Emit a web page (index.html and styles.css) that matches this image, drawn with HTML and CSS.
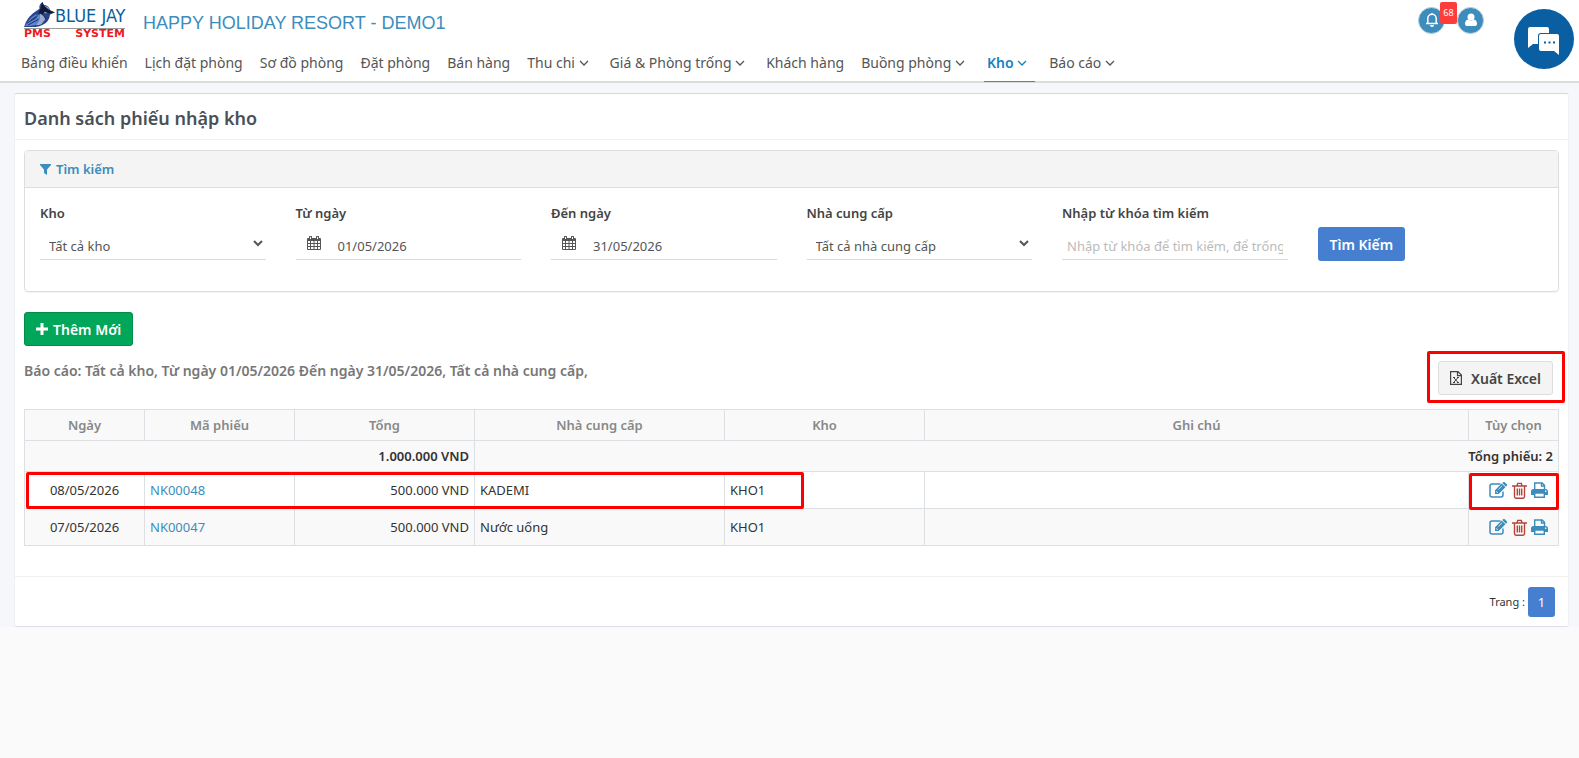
FILE: index.html
```html
<!DOCTYPE html>
<html lang="vi">
<head>
    <meta charset="UTF-8">
    <meta name="viewport" content="width=device-width, initial-scale=1.0">
    <title>Danh sách phiếu nhập kho</title>
    <link rel="stylesheet" href="styles.css">
</head>
<body>
    <svg class="sprite" aria-hidden="true">
        <symbol id="chevron" viewBox="0 0 10 10"><path d="M1 3l4 4 4-4" fill="none" stroke="currentColor" stroke-width="1.3"/></symbol>
        <symbol id="calendar" viewBox="0 0 14 14">
            <path fill="currentColor" fill-rule="evenodd" d="M1 2h1V1a1 1 0 0 1 3 0v1h4V1a1 1 0 0 1 3 0v1h1a1 1 0 0 1 1 1v10a1 1 0 0 1-1 1H1a1 1 0 0 1-1-1V3a1 1 0 0 1 1-1zM1 5v2h2V5zm3 0v2h2.500V5zm3.500 0v2H10V5zM11 5v2h2V5zM1 8v2h2V8zm3 0v2h2.500V8zm3.500 0v2H10V8zM11 8v2h2V8zM1 11v2h2v-2zm3 0v2h2.500v-2zm3.500 0v2H10v-2zM11 11v2h2v-2zM3 1v2h1V1zm7 0v2h1V1z"/>
        </symbol>
        <symbol id="edit" viewBox="0 0 19 16">
            <path d="M14 9.500V13a2 2 0 0 1-2 2H3a2 2 0 0 1-2-2V4a2 2 0 0 1 2-2h8.500" fill="none" stroke="currentColor" stroke-width="1.500"/>
            <path d="M6 12V8.300l6.700-6.700 3.700 3.700L9.700 12zM13.300 1l.8-.7a1.200 1.200 0 0 1 1.700 0L17.700 2.200a1.200 1.200 0 0 1 0 1.700l-.8.800z" fill="currentColor"/>
            <path d="M7 9.200l1.800 1.800M9.300 7.500l3.700-3.700" stroke="#fff" stroke-width=".8"/>
        </symbol>
        <symbol id="trash" viewBox="0 0 15 17">
            <path d="M0 4h15M5 4l.7-2.600h3.600L10 4M2.500 4v10.500q0 1.700 1.500 1.700h7q1.500 0 1.500-1.700V4M5.300 6.500v7M7.500 6.500v7M9.700 6.500v7" fill="none" stroke="currentColor" stroke-width="1.400"/>
        </symbol>
        <symbol id="print" viewBox="0 0 17 16">
            <path d="M3.700 8V1h7.500l2.300 2.300V8M10.500 1v3h3" fill="none" stroke="currentColor" stroke-width="1.400"/>
            <path d="M0 9.500Q0 7 2.500 7h12Q17 7 17 9.500V13h-3v3H3v-3H0zM4.400 11.700v2.900h8.200v-2.900zM14 8.600v1.300h1.300V8.600z" fill="currentColor" fill-rule="evenodd"/>
        </symbol>
    </svg>

    <header class="header">
        <div class="brand-row">
            <a class="logo" href="#" aria-label="Blue Jay PMS System">
                <span class="logo-top">
                    <svg class="bird" viewBox="0 0 32 27" aria-hidden="true">
                        <path d="M0 26q2-8 9-14 4-3 7-5-1-4 3-7l1 3q6 0 7 6l5 2-5 2q-1 8-8 11-5 2.500-9 2z" fill="#29428c"/>
                        <path d="M1 25q4-8 11-12 7 0 7 5-3 6-12 7z" fill="#5c84cc"/>
                        <path d="M18 5l3-1q5 1 5 5l-3 3-5-3z" fill="#b9c6df"/>
                        <path d="M17 7l2-7 2 4 5 4 6 3-6 1-5-2-2 3 4 4-2 1-6-6z" fill="#111b35"/>
                        <path d="M16 12q4 1 6 6l-4 5q-3 1-6 1 6-4 4-12z" fill="#9badcf"/>
                        <path d="M3 22l10-6M4 24l11-6M7 19l7-5" stroke="#1a2c66" stroke-width="1"/>
                    </svg>
                    <span class="logo-name">BLUE JAY</span>
                </span>
                <span class="logo-sub"><span>PMS</span><span>SYSTEM</span></span>
            </a>
            <span class="hotel">HAPPY HOLIDAY RESORT - DEMO1</span>
            <div class="user-tools">
                <button class="round-btn" type="button" aria-label="Thông báo">
                    <svg width="16" height="16" viewBox="0 0 16 16"><path d="M2 11.500h12M3.800 11V6.500a4.200 4.200 0 0 1 8.400 0V11M8 1v1.500" fill="none" stroke="#fff" stroke-width="1.500"/><path d="M6 13h4a2 2 0 0 1-4 0z" fill="#fff"/></svg>
                    <span class="badge">68</span>
                </button>
                <button class="round-btn" type="button" aria-label="Tài khoản">
                    <svg width="14" height="14" viewBox="0 0 14 14"><circle cx="7" cy="4" r="3.500" fill="#fff"/><path d="M1 11q0-4 3-4.500 3 2 6 0 3 .5 3 4.500 0 2-2 2H3q-2 0-2-2z" fill="#fff"/></svg>
                </button>
            </div>
        </div>
        <nav class="menu">
            <a href="#">Bảng điều khiển</a>
            <a href="#">Lịch đặt phòng</a>
            <a href="#">Sơ đồ phòng</a>
            <a href="#">Đặt phòng</a>
            <a href="#">Bán hàng</a>
            <a class="has-sub" href="#">Thu chi <svg><use href="#chevron"/></svg></a>
            <a class="has-sub" href="#">Giá &amp; Phòng trống <svg><use href="#chevron"/></svg></a>
            <a href="#">Khách hàng</a>
            <a class="has-sub" href="#">Buồng phòng <svg><use href="#chevron"/></svg></a>
            <a class="has-sub active" href="#">Kho <svg><use href="#chevron"/></svg></a>
            <a class="has-sub" href="#">Báo cáo <svg><use href="#chevron"/></svg></a>
        </nav>
        <button class="chat" type="button" aria-label="Trò chuyện">
            <svg width="32" height="28" viewBox="0 0 32 28">
                <path d="M2 0h17q2 0 2 2v4h-8q-3 0-3 3v8H5l-5 4V2q0-2 2-2z" fill="#fff"/>
                <path d="M13 7h16q2 0 2 2v19l-5-4H13q-2 0-2-2V9q0-2 2-2z" fill="#fff"/>
                <path d="M16 15.500h2M20.500 15.500h2M25 15.500h2" stroke="#0a5fa3" stroke-width="2"/>
            </svg>
        </button>
    </header>

    <main class="content">
        <section class="card">
            <h1>Danh sách phiếu nhập kho</h1>
            <div class="card-body">
                <form class="panel">
                    <div class="panel-head">
                        <svg width="11" height="11" viewBox="0 0 11 11"><path d="M0 0h11v1L7 5.500V11L4 9V5.500L0 1z" fill="currentColor"/></svg>
                        Tìm kiếm
                    </div>
                    <div class="filters">
                        <div class="field">
                            <label for="kho">Kho</label>
                            <select id="kho"><option>Tất cả kho</option></select>
                        </div>
                        <div class="field">
                            <label for="from">Từ ngày</label>
                            <div class="date">
                                <svg><use href="#calendar"/></svg>
                                <input type="text" id="from" value="01/05/2026">
                            </div>
                        </div>
                        <div class="field">
                            <label for="to">Đến ngày</label>
                            <div class="date">
                                <svg><use href="#calendar"/></svg>
                                <input type="text" id="to" value="31/05/2026">
                            </div>
                        </div>
                        <div class="field">
                            <label for="supplier">Nhà cung cấp</label>
                            <select id="supplier"><option>Tất cả nhà cung cấp</option></select>
                        </div>
                        <div class="field">
                            <label for="keyword">Nhập từ khóa tìm kiếm</label>
                            <input type="text" id="keyword" placeholder="Nhập từ khóa để tìm kiếm, để trống">
                        </div>
                        <div class="field field-btn">
                            <button class="btn btn-blue" type="button">Tìm Kiếm</button>
                        </div>
                    </div>
                </form>

                <button class="btn btn-green" type="button">
                    <svg width="12" height="12" viewBox="0 0 12 12"><path d="M4.500 0h3v4.500H12v3H7.500V12h-3V7.500H0v-3h4.500z" fill="currentColor"/></svg>
                    Thêm Mới
                </button>

                <div class="report-row">
                    <p class="report">Báo cáo: Tất cả kho, Từ ngày 01/05/2026 Đến ngày 31/05/2026, Tất cả nhà cung cấp,</p>
                    <div class="export">
                        <button class="btn btn-grey" type="button">
                            <svg width="12" height="14" viewBox="0 0 12 14"><path d="M.6.6h7.400l3.400 3.400v9.400H.6zM7.500.6v4h4" fill="none" stroke="currentColor" stroke-width="1.200"/><path d="M3.700 6.500l4.300 5M8 6.500l-4.300 5M3 6.500h2M7 6.500h2M3 11.500h2M7 11.500h2" stroke="currentColor" stroke-width="1"/></svg>
                            Xuất Excel
                        </button>
                    </div>
                </div>

                <table class="list">
                    <colgroup>
                        <col class="c-date"><col class="c-code"><col class="c-total"><col class="c-supplier"><col class="c-store"><col><col class="c-tools">
                    </colgroup>
                    <thead>
                        <tr>
                            <th>Ngày</th><th>Mã phiếu</th><th>Tổng</th><th>Nhà cung cấp</th><th>Kho</th><th>Ghi chú</th><th>Tùy chọn</th>
                        </tr>
                    </thead>
                    <tbody>
                        <tr class="sum">
                            <td colspan="3">1.000.000 VND</td>
                            <td colspan="4">Tổng phiếu: 2</td>
                        </tr>
                        <tr class="item">
                            <td class="center marked">08/05/2026<span class="mark mark-row"></span></td>
                            <td><a href="#">NK00048</a></td>
                            <td class="right">500.000 VND</td>
                            <td>KADEMI</td>
                            <td>KHO1</td>
                            <td></td>
                            <td class="marked">
                                <div class="tools">
                                    <a href="#" aria-label="Sửa"><svg class="i-edit"><use href="#edit"/></svg></a>
                                    <a class="del" href="#" aria-label="Xóa"><svg class="i-trash"><use href="#trash"/></svg></a>
                                    <a href="#" aria-label="In"><svg class="i-print"><use href="#print"/></svg></a>
                                </div>
                                <span class="mark mark-cell"></span>
                            </td>
                        </tr>
                        <tr class="item odd">
                            <td class="center">07/05/2026</td>
                            <td><a href="#">NK00047</a></td>
                            <td class="right">500.000 VND</td>
                            <td>Nước uống</td>
                            <td>KHO1</td>
                            <td></td>
                            <td>
                                <div class="tools">
                                    <a href="#" aria-label="Sửa"><svg class="i-edit"><use href="#edit"/></svg></a>
                                    <a class="del" href="#" aria-label="Xóa"><svg class="i-trash"><use href="#trash"/></svg></a>
                                    <a href="#" aria-label="In"><svg class="i-print"><use href="#print"/></svg></a>
                                </div>
                            </td>
                        </tr>
                    </tbody>
                </table>
            </div>
            <div class="card-foot">
                <span>Trang :</span>
                <a class="page" href="#">1</a>
            </div>
        </section>
    </main>
</body>
</html>
```
FILE: styles.css
```css
* {
    box-sizing: border-box;
}
body {
    margin: 0;
    font-family: "Segoe UI", "Noto Sans", sans-serif;
    font-size: 13px;
    line-height: 20px;
    color: #333;
    background: #fafafa;
}
a {
    color: #3c8dbc;
    text-decoration: none;
}
button, input, select {
    font-family: inherit;
    font-size: 13px;
}
.sprite {
    display: none;
}

/* header */
.header {
    position: relative;
    background: #fff;
    border-bottom: 2px solid #dcdcdc;
}
.brand-row {
    display: flex;
    align-items: center;
    height: 44px;
    padding: 0 95px 4px 24px;
}
.logo {
    flex: none;
    width: 101px;
    margin-right: 18px;
}
.logo-top {
    display: flex;
    align-items: flex-end;
    height: 27px;
    border-bottom: 1px solid #999;
}
.bird {
    width: 31px;
    height: 26px;
    flex: none;
}
.logo-name {
    font: 18px/24px "Liberation Sans Narrow", "DejaVu Sans Condensed", sans-serif;
    color: #0b5f9c;
    white-space: nowrap;
}
.logo-sub {
    display: flex;
    justify-content: space-between;
    font: bold 11px/10px "DejaVu Sans", sans-serif;
    color: #f01820;
}
.hotel {
    font: 18px/24px "Liberation Sans", Arial, sans-serif;
    color: #3c8dbc;
    padding-top: 5px;
}
.user-tools {
    display: flex;
    gap: 12px;
    margin-left: auto;
}
.round-btn {
    position: relative;
    display: flex;
    align-items: center;
    justify-content: center;
    width: 27px;
    height: 27px;
    padding: 0;
    border: 1px solid #b5cfdf;
    border-radius: 50%;
    background: #3c8dbc;
}
.badge {
    position: absolute;
    top: -6px;
    left: 21px;
    width: 17px;
    border-radius: 2px;
    background: #fd3c3c;
    color: #fff;
    font-size: 9px;
    line-height: 22px;
}
.chat {
    position: absolute;
    top: 9px;
    right: 5px;
    display: flex;
    align-items: center;
    justify-content: center;
    width: 60px;
    height: 60px;
    padding: 4px 0 0;
    border: 0;
    border-radius: 50%;
    background: #0a5fa3;
}
.menu {
    display: flex;
    padding-left: 13px;
    font-size: 14px;
    line-height: 37px;
}
.menu a {
    padding: 0 9px 0 8px;
    color: #555;
}
.menu svg {
    width: 10px;
    height: 10px;
}
.menu .has-sub {
    padding-right: 13px;
}
.menu .active {
    margin: 0 6px 0 6px;
    padding: 0 8px 0 3px;
    font-weight: 600;
    color: #1580bf;
    box-shadow: 0 1px #3c8dbc;
}

/* card */
.content {
    padding: 10px 10px 0 14px;
    background: #f5f7fb;
}
.card {
    background: #fff;
    border: 1px solid #eef0f5;
    border-top-color: #d2d6de;
    border-bottom-color: #dde0e6;
    border-radius: 3px;
}
h1 {
    margin: 0;
    padding: 14px 9px 10px;
    border-bottom: 1px solid #f0f0f0;
    font-size: 18px;
    font-weight: 600;
    line-height: 21px;
    color: #495057;
}
.card-body {
    padding: 10px 9px 30px;
}
.panel {
    border: 1px solid #ddd;
    border-radius: 4px;
    box-shadow: 0 1px 1px rgba(0, 0, 0, .05);
}
.panel-head {
    display: flex;
    align-items: center;
    gap: 5px;
    height: 37px;
    padding: 0 15px;
    border-bottom: 1px solid #ddd;
    border-radius: 3px 3px 0 0;
    background: #f4f4f4;
    font-weight: 600;
    color: #3c8dbc;
}
.filters {
    display: grid;
    grid-template-columns: repeat(6, 1fr);
    padding: 15px 0 30px;
}
.field {
    min-width: 0;
    padding: 0 15px;
}
.field label {
    display: block;
    margin-bottom: 3px;
    font-weight: 600;
    color: #444;
}
.field select, .field input {
    display: block;
    width: 100%;
    height: 34px;
    border: 0;
    border-radius: 0;
    background: transparent;
    color: #555;
    padding: 6px 5px 0;
    outline: none;
}
.field select, .date, #keyword {
    border-bottom: 1px solid #d9d9d9;
}
.date {
    display: flex;
    align-items: center;
    height: 34px;
    padding-left: 11px;
}
.date svg {
    flex: none;
    width: 14px;
    height: 14px;
    margin-right: 12px;
    color: #555;
}
.field input::placeholder {
    color: #bbb;
}
.field-btn {
    padding-top: 24px;
}
.btn {
    display: inline-flex;
    align-items: center;
    gap: 5px;
    height: 34px;
    padding: 0 11px;
    border: 1px solid transparent;
    border-radius: 3px;
    font-size: 14px;
    font-weight: 600;
    white-space: nowrap;
}
.btn-blue {
    background: #467fcf;
    color: #fff;
}
.btn-green {
    margin-top: 20px;
    background: #00a65a;
    border-color: #008d4c;
    color: #fff;
}
.btn-grey {
    gap: 9px;
    background: #f4f4f4;
    border-color: #ddd;
    color: #444;
}
.report-row {
    display: flex;
    align-items: flex-start;
    justify-content: space-between;
    margin: 5px -6px 6px 0;
}
.report {
    margin: 10px 0 0;
    font-size: 14px;
    font-weight: 600;
    color: #777;
}
.export {
    display: flex;
    padding: 7px 9px 5px 8px;
    border: 3px solid #f00;
    border-radius: 2px;
}

/* table */
.list {
    width: 100%;
    table-layout: fixed;
    border-collapse: collapse;
}
.c-date { width: 120px; }
.c-code { width: 150px; }
.c-total { width: 180px; }
.c-supplier { width: 250px; }
.c-store { width: 200px; }
.c-tools { width: 90px; }
.list th, .list td {
    height: 31px;
    padding: 5px;
    border: 1px solid #dcdfe4;
}
.list th {
    background: #f9f9f9;
    font-weight: 600;
    color: #888;
}
.sum td {
    background: #f9f9f9;
    font-weight: 600;
    text-align: right;
    white-space: nowrap;
}
.list .item td {
    height: 37px;
}
.odd td {
    background: #f9f9f9;
}
.center {
    text-align: center;
}
.right {
    text-align: right;
}
.tools {
    display: flex;
    align-items: center;
    justify-content: flex-end;
    gap: 4px;
    padding-right: 5px;
}
.tools svg {
    display: block;
}
.del {
    color: #b5443b;
}
.i-edit { width: 19px; height: 16px; }
.i-trash { width: 15px; height: 17px; }
.i-print { width: 17px; height: 16px; }

/* red frames over the first row */
.marked {
    position: relative;
}
.mark {
    position: absolute;
    border: 3px solid #f00;
    border-radius: 2px;
    pointer-events: none;
}
.mark-row {
    top: 0;
    left: 1px;
    width: 778px;
    height: 37px;
}
.mark-cell {
    top: 1px;
    right: -1px;
    left: 0;
    height: 37px;
}
.card-foot {
    display: flex;
    align-items: center;
    justify-content: flex-end;
    gap: 3px;
    padding: 10px 13px 9px 0;
    border-top: 1px solid #f0f0f0;
    font-size: 11px;
}
.page {
    width: 27px;
    border-radius: 3px;
    background: #467fcf;
    color: #fff;
    font-size: 13px;
    line-height: 30px;
    text-align: center;
}
```
